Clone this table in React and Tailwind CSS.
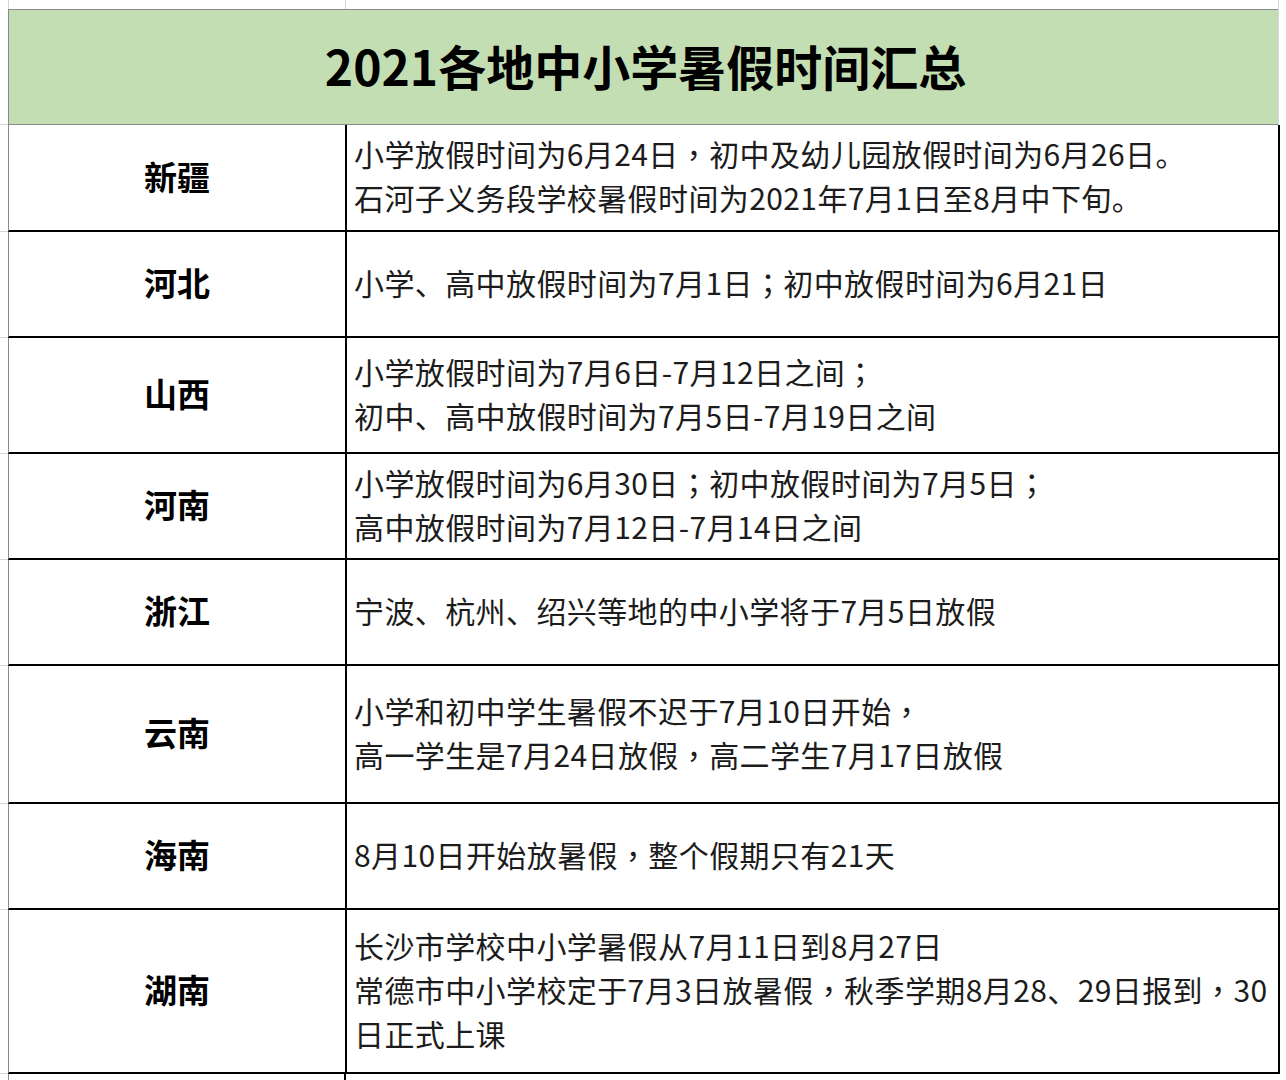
const rows = [
  {
    name: "新疆",
    h: "h-[107px]",
    lines: [
      "小学放假时间为6月24日，初中及幼儿园放假时间为6月26日。",
      "石河子义务段学校暑假时间为2021年7月1日至8月中下旬。",
    ],
  },
  {
    name: "河北",
    h: "h-[106px]",
    lines: ["小学、高中放假时间为7月1日；初中放假时间为6月21日"],
  },
  {
    name: "山西",
    h: "h-[116px]",
    lines: [
      "小学放假时间为7月6日-7月12日之间；",
      "初中、高中放假时间为7月5日-7月19日之间",
    ],
  },
  {
    name: "河南",
    h: "h-[106px]",
    lines: [
      "小学放假时间为6月30日；初中放假时间为7月5日；",
      "高中放假时间为7月12日-7月14日之间",
    ],
  },
  {
    name: "浙江",
    h: "h-[106px]",
    lines: ["宁波、杭州、绍兴等地的中小学将于7月5日放假"],
  },
  {
    name: "云南",
    h: "h-[138px]",
    lines: [
      "小学和初中学生暑假不迟于7月10日开始，",
      "高一学生是7月24日放假，高二学生7月17日放假",
    ],
  },
  {
    name: "海南",
    h: "h-[106px]",
    lines: ["8月10日开始放暑假，整个假期只有21天"],
  },
  {
    name: "湖南",
    h: "h-[164px]",
    lines: [
      "长沙市学校中小学暑假从7月11日到8月27日",
      "常德市中小学校定于7月3日放暑假，秋季学期8月28、29日报到，30",
      "日正式上课",
    ],
  },
];

// full-width comma / semicolon sit centred in the original, as in the TC face
const withPunct = (text) =>
  text.split(/([，；])/).map((part, i) =>
    part === "，" || part === "；" ? (
      <span key={i} style={{ fontFamily: '"Noto Sans CJK TC", sans-serif' }}>
        {part}
      </span>
    ) : (
      part
    )
  );

const Row = ({ row }) => (
  <div className={`flex ${row.h}`}>
    <div className="w-[8px] shrink-0 border-b border-gray-300" />
    <div className="flex flex-1 border-l border-[#8a8a8a] border-b-2 border-b-black">
      <div className="w-[338px] shrink-0 flex items-center justify-center border-r-2 border-black pb-[2px]">
        <span className="text-[33px] font-bold text-black">{row.name}</span>
      </div>
      <div className="flex-1 flex flex-col justify-center pl-[7px] pb-[5px] text-[30px] leading-[44px] tracking-[0.4px] text-[#1c1c1c]">
        {row.lines.map((l, i) => (
          <div key={i} className="whitespace-nowrap">
            {withPunct(l)}
          </div>
        ))}
      </div>
      <div className="w-[2px] shrink-0 bg-black" />
    </div>
    <div className="w-[6px] shrink-0" />
  </div>
);

export default function App() {
  return (
    <div
      className="w-[1286px] h-[1080px] bg-white overflow-hidden"
      style={{ fontFamily: '"Noto Sans CJK SC", "Noto Sans", sans-serif' }}
    >
      {/* strip of the row above */}
      <div className="flex h-[9px]">
        <div className="w-[8px] shrink-0" />
        <div className="w-[338px] border-l border-gray-300 border-r border-r-gray-300" />
        <div className="flex-1" />
        <div className="w-[8px] border-l border-gray-300" />
      </div>

      {/* title */}
      <div className="flex h-[116px]">
        <div className="w-[8px] shrink-0 border-b border-gray-300" />
        <div className="flex-1 flex items-center justify-center bg-[#c4deb3] border-l border-t border-b border-[#8a8a8a] pb-[4px]">
          <h1 className="text-[48px] font-bold text-black leading-none pl-[4px]">
            2021各地中小学暑假时间汇总
          </h1>
        </div>
        <div className="w-[8px] shrink-0 border-l border-gray-300" />
      </div>

      {rows.map((r) => (
        <Row key={r.name} row={r} />
      ))}

      <div className="flex h-[20px]">
        <div className="w-[8px] shrink-0" />
        <div className="w-[338px] border-l border-[#8a8a8a] border-r-2 border-r-black" />
      </div>
    </div>
  );
}
